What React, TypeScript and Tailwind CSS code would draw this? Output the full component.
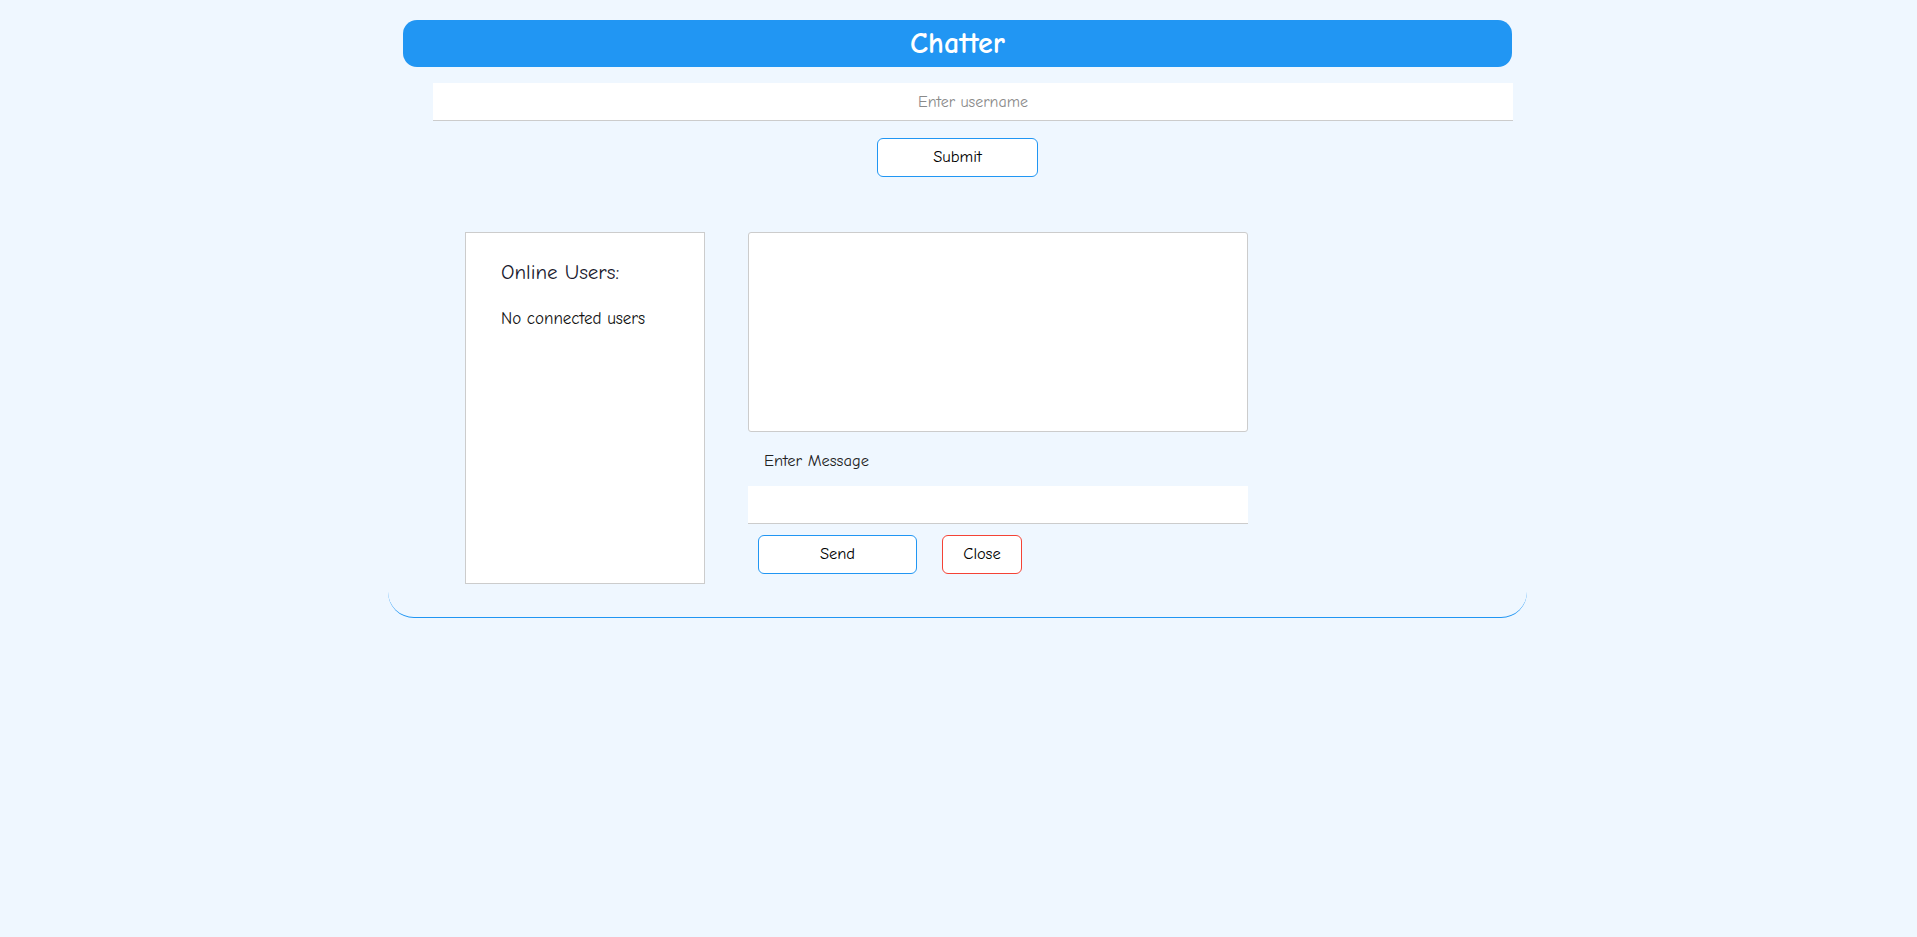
export default function App() {
  return (
    <div
      className="min-h-[937px] w-full bg-[#eff7ff] pt-[20px] text-black"
      style={{ fontFamily: '"Comic Sans MS", "Comic Neue", Lato, sans-serif' }}
    >
      <div className="ml-[388px] w-[1139px] rounded-b-[26px] border-b border-[#2196f3] pb-[33px]">
        {/* Title bar */}
        <div className="mx-[15px] flex h-[47px] items-center justify-center rounded-[14px] bg-[#2196f3]">
          <h1 className="text-[30px] leading-[36px] font-bold text-white">Chatter</h1>
        </div>

        {/* Username */}
        <div className="mt-[16px] ml-[45px] mr-[14px]">
          <input
            type="text"
            placeholder="Enter username"
            className="h-[38px] w-full border-b border-[#cccccc] bg-white text-center text-[16px] outline-none placeholder:text-[#8a8a8a]"
          />
        </div>
        <div className="mt-[17px] flex justify-center">
          <button className="h-[39px] w-[161px] rounded-[6px] border border-[#2196f3] bg-white text-[16.5px]">
            Submit
          </button>
        </div>

        {/* Chat area */}
        <div className="mt-[55px] flex gap-[43px] pl-[77px]">
          <div className="h-[352px] w-[240px] border border-[#cccccc] bg-white px-[35px] pt-[25px]">
            <h3 className="text-[21px] leading-[28px] text-[#1a1a2e]">Online Users:</h3>
            <p className="mt-[21px] text-[17px] leading-[24px] text-[#111]">No connected users</p>
          </div>

          <div className="flex w-[500px] flex-col">
            <div className="h-[200px] rounded-[3px] border border-[#cccccc] bg-white"></div>
            <label className="mt-[17px] pl-[16px] text-[16.5px] leading-[24px] text-[#222]">Enter Message</label>
            <input
              type="text"
              className="mt-[13px] h-[38px] w-full border-b border-[#cccccc] bg-white outline-none"
            />
            <div className="mt-[11px] flex gap-[25px] pl-[10px]">
              <button className="h-[39px] w-[159px] rounded-[6px] border border-[#2196f3] bg-white text-[16.5px]">
                Send
              </button>
              <button className="h-[39px] w-[80px] rounded-[6px] border border-[#f44336] bg-white text-[16.5px]">
                Close
              </button>
            </div>
          </div>
        </div>
      </div>
    </div>
  );
}
